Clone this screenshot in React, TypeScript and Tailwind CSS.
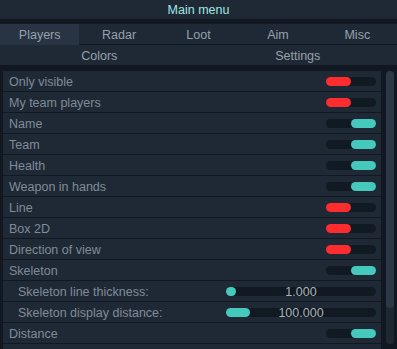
import React from "react";

type Row =
  | { kind: "toggle"; label: string; on: boolean }
  | { kind: "slider"; label: string; value: string; fill: number };

const rows: Row[] = [
  { kind: "toggle", label: "Only visible", on: false },
  { kind: "toggle", label: "My team players", on: false },
  { kind: "toggle", label: "Name", on: true },
  { kind: "toggle", label: "Team", on: true },
  { kind: "toggle", label: "Health", on: true },
  { kind: "toggle", label: "Weapon in hands", on: true },
  { kind: "toggle", label: "Line", on: false },
  { kind: "toggle", label: "Box 2D", on: false },
  { kind: "toggle", label: "Direction of view", on: false },
  { kind: "toggle", label: "Skeleton", on: true },
  { kind: "slider", label: "Skeleton line thickness:", value: "1.000", fill: 10 },
  { kind: "slider", label: "Skeleton display distance:", value: "100.000", fill: 24 },
  { kind: "toggle", label: "Distance", on: true },
  { kind: "toggle", label: "", on: true },
];

function Toggle({ on }: { on: boolean }) {
  return (
    <div className="w-[50px] h-[9px] rounded-full bg-[#111922] flex">
      {on ? (
        <div className="ml-[25px] w-[25px] h-[9px] rounded-full bg-[#45c9bc]" />
      ) : (
        <div className="w-[25px] h-[9px] rounded-full bg-[#fd2d2d]" />
      )}
    </div>
  );
}

function Slider({ value, fill }: { value: string; fill: number }) {
  return (
    <div className="relative w-[150px] h-[9px] rounded-full bg-[#111922]">
      <div
        className="absolute left-0 top-0 h-[9px] rounded-full bg-[#45c9bc]"
        style={{ width: fill }}
      />
      <div className="absolute inset-0 flex items-center justify-center pt-[2px] text-[12.5px] text-[#a9b1b9] leading-none">
        {value}
      </div>
    </div>
  );
}

export default function App() {
  const tabs = ["Players", "Radar", "Loot", "Aim", "Misc"];
  return (
    <div
      className="w-[397px] h-[349px] overflow-hidden bg-[#111821] flex flex-col"
      style={{ fontFamily: '"Liberation Sans", Arial, sans-serif' }}
    >
      <div className="h-[19px] pt-[2px] bg-[#1f2936] flex items-center justify-center text-[12.5px] text-[#9fe6e1]">
        Main menu
      </div>
      <div className="h-[5px]" />
      <div className="h-[20px] bg-[#1f2936] grid grid-cols-5 text-[12.5px] text-[#96a0aa]">
        {tabs.map((t, i) => (
          <div
            key={t}
            className={
              "flex items-center justify-center pt-[2px] " + (i === 0 ? "bg-[#283444]" : "")
            }
          >
            {t}
          </div>
        ))}
      </div>
      <div className="h-px" />
      <div className="h-[20px] bg-[#1f2936] grid grid-cols-2 text-[12.5px] text-[#96a0aa]">
        <div className="flex items-center justify-center pt-[2px]">Colors</div>
        <div className="flex items-center justify-center pt-[2px]">Settings</div>
      </div>
      <div className="h-[6px]" />
      <div className="flex flex-1 min-h-0">
        <div className="ml-[3px] w-[378px] flex flex-col gap-px">
          {rows.map((r, i) => (
            <div
              key={i}
              className="h-[20px] shrink-0 bg-[#1f2936] flex items-center text-[12.5px] text-[#808b96]"
            >
              {r.kind === "toggle" ? (
                <>
                  <div className="pl-[6px] pt-[2px] flex-1">{r.label}</div>
                  <div className="mr-[5px]">
                    <Toggle on={r.on} />
                  </div>
                </>
              ) : (
                <>
                  <div className="pl-[15px] pt-[2px] flex-1">{r.label}</div>
                  <div className="mr-[5px]">
                    <Slider value={r.value} fill={r.fill} />
                  </div>
                </>
              )}
            </div>
          ))}
        </div>
        <div className="ml-[5px] w-[8px] h-[273px] rounded-full bg-[#1e2833] flex flex-col">
          <div className="h-[237px] rounded-full bg-[#2d3846]" />
        </div>
      </div>
    </div>
  );
}
